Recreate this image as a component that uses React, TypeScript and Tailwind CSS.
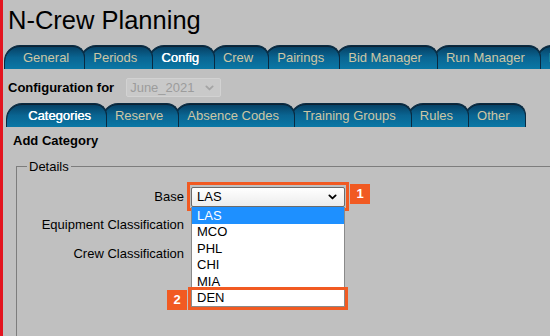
import clsx from 'clsx'

const mainTabs = [
  { label: 'General', z: 'z-[9]' },
  { label: 'Periods', z: 'z-[8]' },
  { label: 'Config', z: 'z-[7]', active: true },
  { label: 'Crew', z: 'z-[6]' },
  { label: 'Pairings', z: 'z-[5]' },
  { label: 'Bid Manager', z: 'z-[4]' },
  { label: 'Run Manager', z: 'z-[3]' },
  { label: 'Reports', z: 'z-[2]' },
]

const subTabs = [
  { label: 'Categories', z: 'z-[9]', active: true },
  { label: 'Reserve', z: 'z-[8]' },
  { label: 'Absence Codes', z: 'z-[7]' },
  { label: 'Training Groups', z: 'z-[6]' },
  { label: 'Rules', z: 'z-[5]' },
  { label: 'Other', z: 'z-[4]' },
]

const baseOptions = ['LAS', 'MCO', 'PHL', 'CHI', 'MIA', 'DEN']

type Tab = { label: string; z: string; active?: boolean }

function TabBar({ tabs, firstPad }: { tabs: Tab[]; firstPad: string }) {
  return (
    <div className="flex">
      {tabs.map((tab, i) => (
        <div
          key={tab.label}
          className={clsx(
            'relative h-[24px] shrink-0 whitespace-nowrap rounded-tl-[16px] rounded-tr-[12px] border border-b-0 border-[#0a2a40] bg-linear-to-b from-[#063f62] via-[#0a6592] to-[#0a78a6] pr-[15px] pt-[5px] text-[13px] leading-[13px] shadow-[inset_0_1px_0_#0d2233]',
            i === 0 ? firstPad : '-ml-[5px] pl-[12px]',
            tab.z,
            tab.active ? 'text-white [text-shadow:0.4px_0_0_#fff]' : 'text-[#cdc6a4]',
          )}
        >
          {tab.label}
        </div>
      ))}
    </div>
  )
}

function Chevron({ className }: { className?: string }) {
  return (
    <svg viewBox="0 0 10 6" className={className} fill="none" stroke="currentColor" strokeWidth="2" strokeLinecap="round" strokeLinejoin="round">
      <path d="M1.5 1.2 5 4.6 8.5 1.2" />
    </svg>
  )
}

function Badge({ n, className }: { n: number; className: string }) {
  return (
    <div className={clsx('absolute flex h-[20px] w-[20px] items-center justify-center bg-[#f15a22] text-[13px] font-bold text-white', className)}>
      {n}
    </div>
  )
}

export default function App() {
  return (
    <div className="h-[336px] w-[550px] overflow-hidden border-l-[3px] border-[#e3141f] bg-[#c0c0c0] font-['Liberation_Sans',Arial,sans-serif] text-[13px] text-black">
      <h1 className="ml-[5px] pt-[8px] text-[25.5px] leading-[25px]">N-Crew Planning</h1>

      <div className="mt-[12px] pl-[1px]">
        <TabBar tabs={mainTabs} firstPad="pl-[18px]" />
      </div>

      <div className="ml-[5px] mt-[9px] flex h-[19px] items-center">
        <span className="font-bold">Configuration for</span>
        <div className="ml-[12px] flex h-[19px] w-[95px] items-center justify-between rounded-[2px] border border-[#d2d2d2] bg-[#c9c9c9] pl-[3px] pr-[6px] text-[#9c9c9c]">
          <span>June_2021</span>
          <Chevron className="h-[6px] w-[9px] text-[#a4a4a4]" />
        </div>
      </div>

      <div className="mt-[6px] pl-[3px]">
        <TabBar tabs={subTabs} firstPad="pl-[21px]" />
      </div>

      <p className="ml-[10px] mt-[6px] font-bold leading-[15px]">Add Category</p>

      <fieldset className="-mr-[40px] ml-[13px] mt-[11px] h-[200px] border border-[#7d7d7d]">
        <legend className="ml-[10px] px-[2px] leading-[15px]">Details</legend>

        <div className="pt-[9px]">
          <div className="flex h-[28px] items-center">
            <label className="mr-[7px] w-[167px] text-right">Base</label>
            <div className="relative">
              <div className="flex h-[20px] w-[154px] items-center justify-between rounded-[2px] border border-[#6b6b6b] bg-linear-to-b from-white to-[#ececec] pl-[5px] pr-[7px]">
                <span>LAS</span>
                <Chevron className="h-[6px] w-[9px] text-black" />
              </div>
              <div className="absolute -bottom-[4px] -left-[4px] -right-[4px] -top-[5px] border-[3px] border-[#f15a22]" />
              <Badge n={1} className="-top-[3px] left-[159px]" />

              <div className="absolute left-0 top-[20px] z-10 w-[154px] border-x border-b border-[#8a8a8a] bg-white">
                {baseOptions.map((opt) => (
                  <div
                    key={opt}
                    className={clsx(
                      'relative flex h-[16.5px] items-center pl-[5px]',
                      opt === 'LAS' && 'bg-[#1e90ff] text-white',
                    )}
                  >
                    {opt}
                    {opt === 'DEN' ? (
                      <>
                        <div className="absolute -bottom-[4px] -left-[4px] -right-[4px] -top-[3px] border-[3px] border-[#f15a22]" />
                        <Badge n={2} className="-left-[25px] top-0" />
                      </>
                    ) : null}
                  </div>
                ))}
              </div>
            </div>
          </div>

          <div className="flex h-[28px] items-center">
            <label className="w-[167px] text-right">Equipment Classification</label>
          </div>

          <div className="flex h-[29px] items-center">
            <label className="w-[167px] text-right">Crew Classification</label>
          </div>
        </div>
      </fieldset>
    </div>
  )
}
